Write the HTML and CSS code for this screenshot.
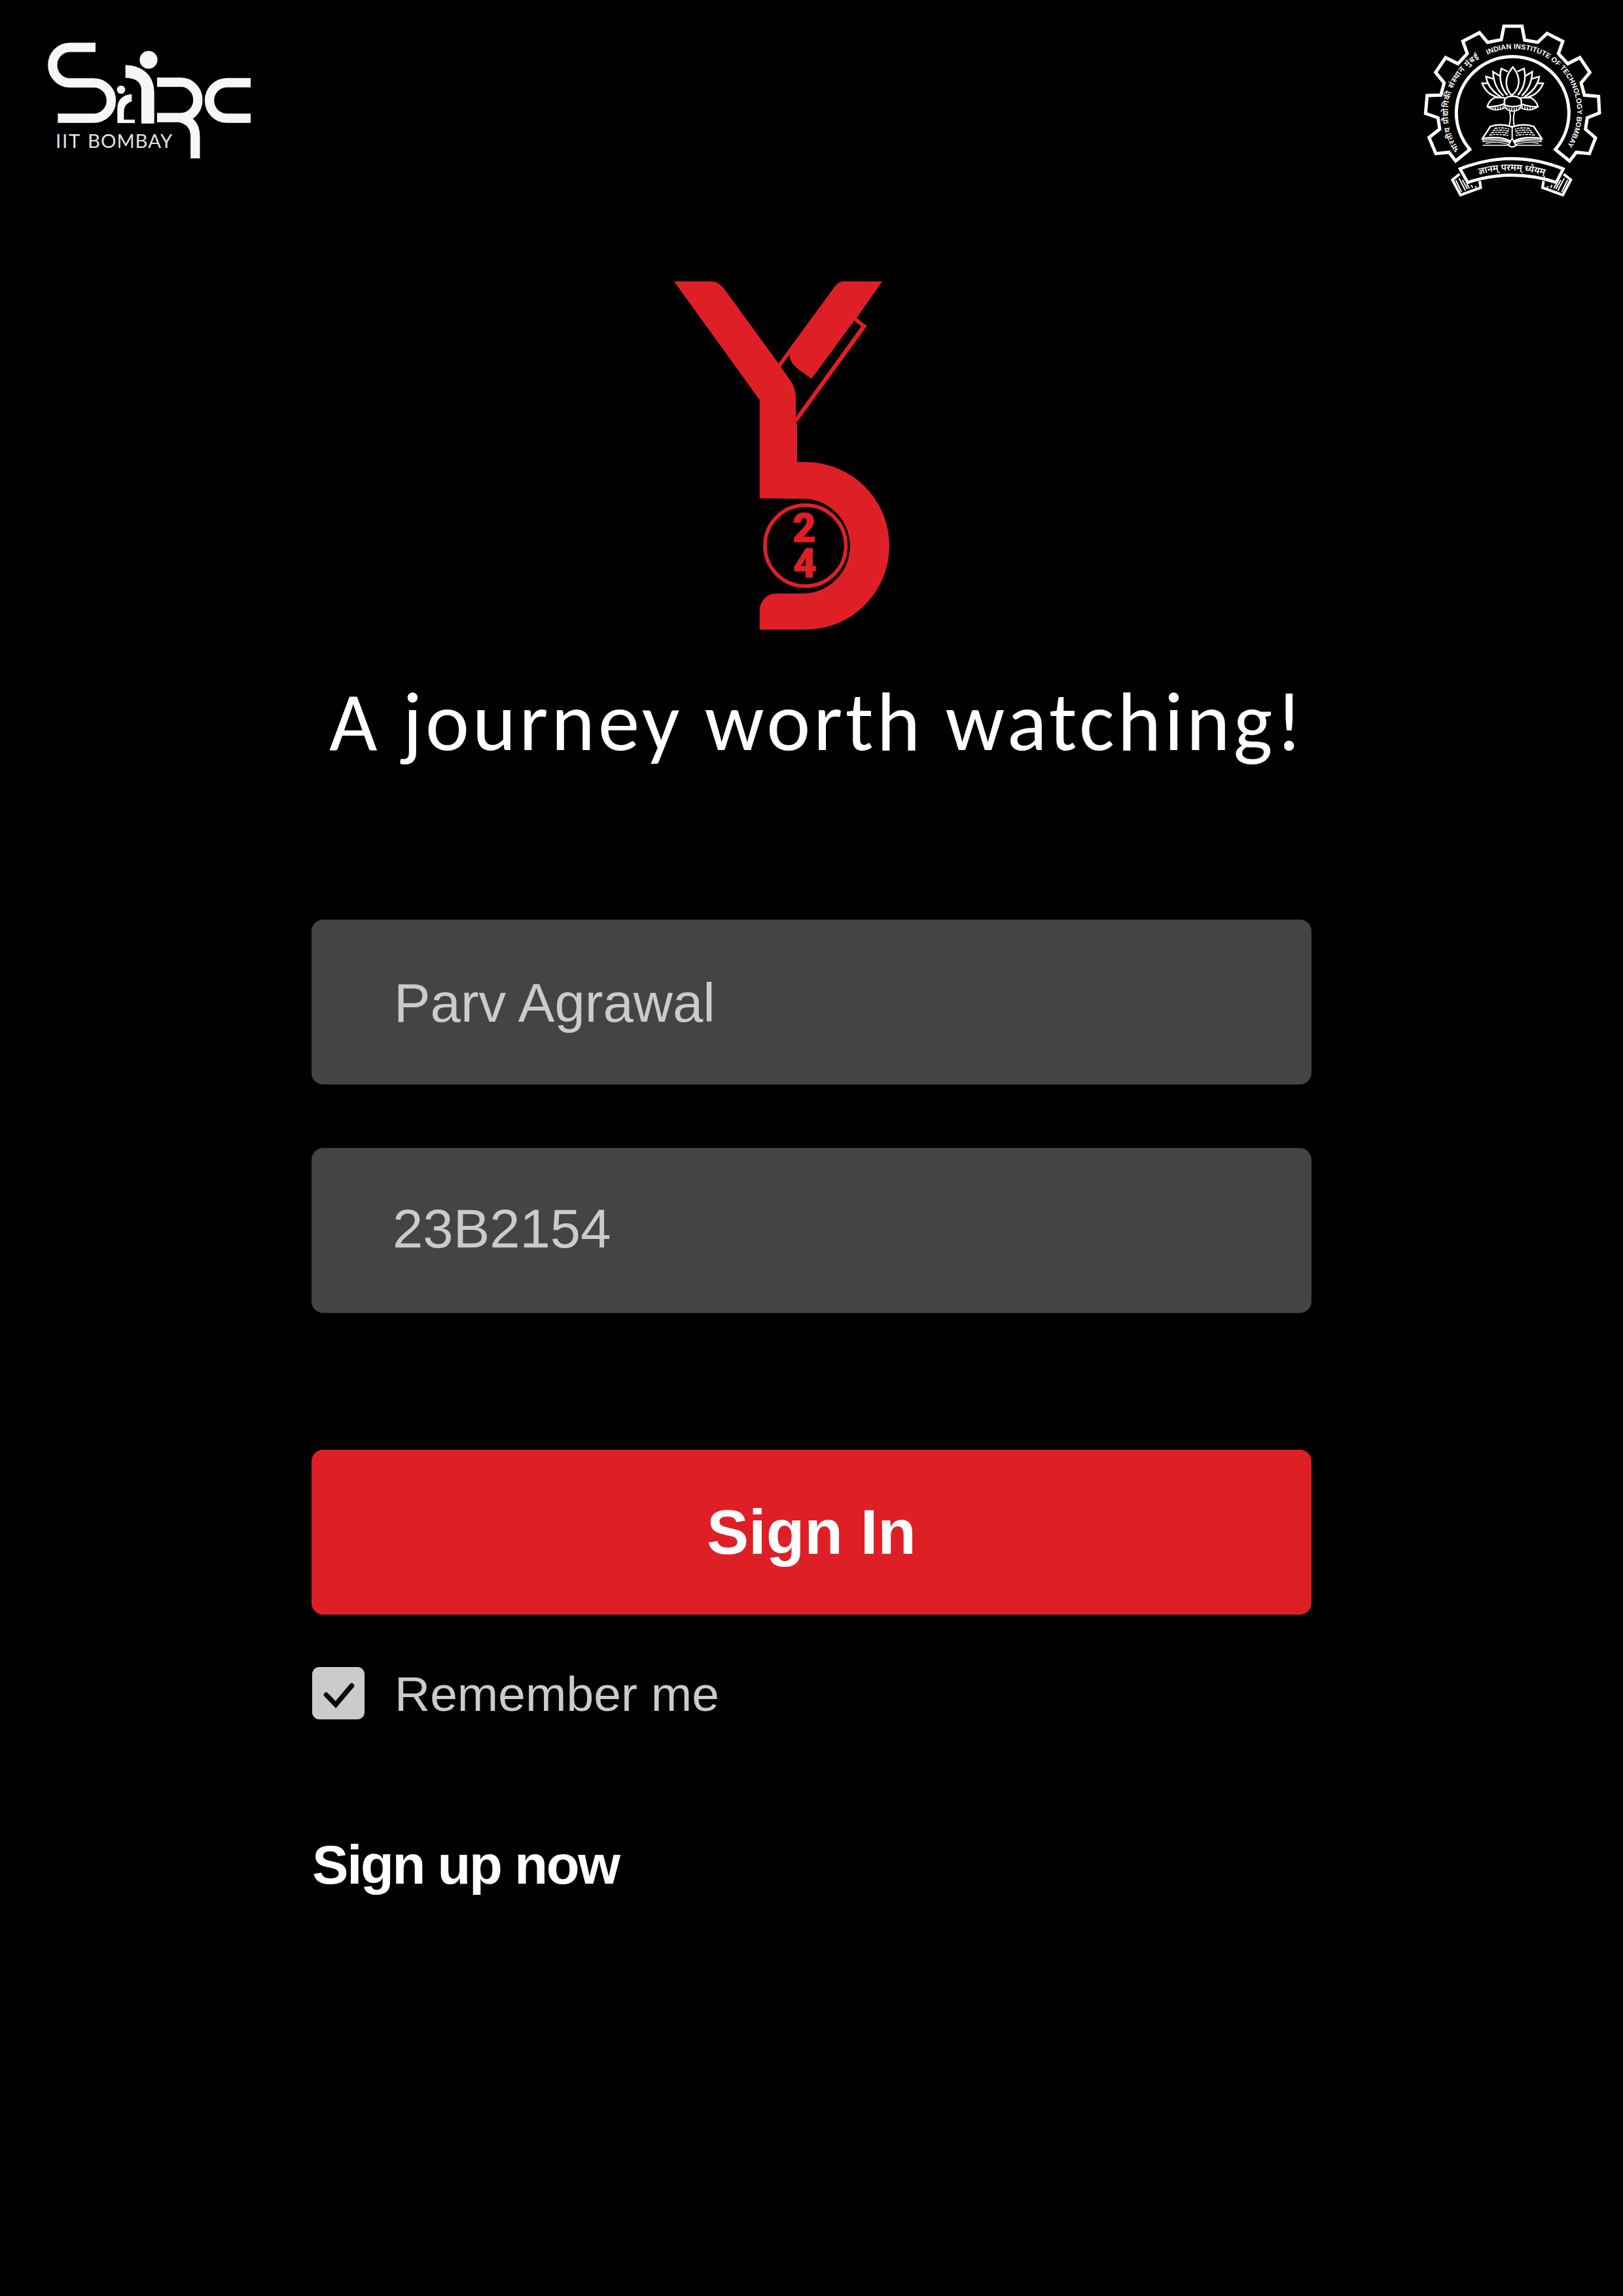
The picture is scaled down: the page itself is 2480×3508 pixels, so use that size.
FILE: index.html
```html
<!DOCTYPE html>
<html lang="en">
<head>
<meta charset="utf-8">
<title>Sign In</title>
<link rel="stylesheet" href="styles.css">
</head>
<body>
<main class="page">
  <header class="header">
    <svg class="sirc" viewBox="39 45 930 531" role="img" aria-label="SIRC IIT Bombay">
      <g fill="none" stroke="#f8f6f5" stroke-width="43">
        <path d="M258 67H140A79 81.5 0 0 0 140 230H250A80 81 0 0 1 250 392H85"/>
        <path d="M540 227H650A77 81 0 0 1 650 389H540M645 389Q715 405 715 475V576"/>
        <path d="M969 229H860A80 81.5 0 0 0 860 392H969"/>
      </g>
      <g fill="#f8f6f5">
        <circle cx="375" cy="261" r="19"/>
        <path d="M424 281V315Q388 325 388 365V398H438V414H358V345Q360 287 424 281Z"/>
        <circle cx="501" cy="124" r="41"/>
        <path d="M395 148C475 152 527 195 527 275V416H468V262C468 226 440 207 395 207Z"/>
      </g>
      <g class="sirc-text">
        <text x="75" y="528" textLength="112">IIT</text>
        <text x="222" y="528" textLength="388">BOMBAY</text>
      </g>
    </svg>

    <svg class="emblem" viewBox="0 0 900 870" role="img" aria-label="Indian Institute of Technology Bombay">
      <defs>
        <path id="arc-en" d="M339 191A288 288 0 0 1 688 630"/>
        <path id="arc-hi" d="M211 628A294 294 0 0 1 324 194"/>
        <path id="arc-motto" d="M300 740Q450 700 605 745"/>
        <g id="petals">
          <path d="M432 268L402 254C390 300 402 345 430 376M398 290L364 269C366 315 382 352 412 379M367 302L332 291C338 332 365 362 400 384M341 322L314 322C326 352 346 376 386 386"/>
          <path d="M418 388L372 387C352 398 341 414 338 429Q374 432 416 416"/>
          <path d="M338 429Q372 455 420 434M350 432V438M362 434V442M374 433V443M386 431V443M398 428V440M410 424V437" stroke-width="5"/>
        </g>
        <g id="book">
          <path d="M452 522Q400 504 352 520L316 575Q400 562 445 588"/>
          <path d="M318 575V590Q400 578 444 596M316 606H432M330 597Q395 586 440 604M318 583Q390 572 446 592" stroke-width="4"/>
          <path d="M370 529Q405 522 438 532M362 539Q400 532 438 542M355 549Q400 542 436 552M347 559Q390 553 434 561" stroke-width="5" stroke-dasharray="14 4 9 4"/>
        </g>
        <g id="scroll">
          <path d="M211 738L178 764L215 834L308 800L303 770" stroke-width="12"/>
          <path d="M193 765L220 820M208 757L238 814M224 765L247 806M244 783L256 803M264 788L271 800M282 794L287 800" stroke-width="6"/>
        </g>
      </defs>
      <g fill="none" stroke="#fff" stroke-width="7.5" stroke-linejoin="miter">
        <path stroke-width="15" d="M258 625L193 678L162 638L102 644L71 570L120 532L112 480L55 460L62 378L125 376L140 320L101 272L147 204L203 232L246 186L226 129L302 90L339 134L402 122L414 60H497L509 124L569 134L612 93L684 130L664 186L707 232L762 204L808 272L768 320L783 376L848 382L852 458L796 480L788 532L834 572L806 644L746 638L715 678L650 625A258 258 0 1 0 258 625Z"/>
        <path stroke-width="14" d="M213 714Q450 620 686 714L654 776Q450 710 248 776Z"/>
        <use href="#scroll"/>
        <use href="#scroll" transform="matrix(-1 0 0 1 899 0)"/>
        <path d="M455 247C414 295 418 345 450 378C490 345 494 295 455 247Z"/>
        <use href="#petals"/>
        <use href="#petals" transform="matrix(-1 0 0 1 908 0)"/>
        <path d="M416 400C425 375 482 375 494 400V422Q456 436 417 422Z"/>
        <path d="M417 422Q420 448 455 450Q490 448 494 422M428 431V442M439 434V447M450 435V449M461 435V449M472 434V447M483 431V442" stroke-width="5"/>
        <path d="M441 450Q448 485 438 515M463 450Q454 485 461 515" stroke-width="6"/>
        <use href="#book"/>
        <use href="#book" transform="matrix(-1 0 0 1 903 0)"/>
        <path d="M452 520V575M452 575Q440 595 435 606Q452 622 470 606Q462 592 452 575Z" stroke-width="6"/>
      </g>
      <g fill="#fff">
        <text class="ring-en"><textPath href="#arc-en" textLength="745">INDIAN INSTITUTE OF TECHNOLOGY BOMBAY</textPath></text>
        <text class="ring-hi"><textPath href="#arc-hi" textLength="484">भारतीय प्रौद्योगिकी संस्थान मुंबई</textPath></text>
        <text class="motto"><textPath href="#arc-motto" textLength="304">ज्ञानम् परमम् ध्येयम्</textPath></text>
      </g>
    </svg>
  </header>

  <svg class="brand" viewBox="1030 430 330 532" role="img" aria-label="Y 24">
    <g fill="#de2026">
      <path d="M1030 430H1088Q1098 430 1107 442L1189.3 555L1206.7 580Q1216 592 1216 608V643L1218 650V706H1231A127.8 127.8 0 0 1 1231 962H1160.7V933A26 26 0 0 1 1187 906.7H1231A72.5 72.5 0 0 0 1231 762Q1210 762 1186 761.5H1160.7V611Z"/>
      <path d="M1288 430H1348L1309 485.7L1324.7 498L1217.3 645.7L1215 638.5L1316 498.7L1305.3 490L1240 578.7L1218 562.7Q1206 553 1206.5 541.7L1192.7 561L1189 556L1271.7 443.3Q1280 430 1288 430Z"/>
      <text class="year" x="1211 1212" y="828.3 882.3">24</text>
    </g>
    <circle cx="1230.7" cy="833.7" r="61.8" fill="none" stroke="#de2026" stroke-width="5.6"/>
  </svg>

  <h1 class="tagline">A journey worth watching!</h1>

  <form class="form">
    <div class="field field-name">Parv Agrawal</div>
    <div class="field field-id">23B2154</div>
    <button class="submit" type="button">Sign In</button>
    <div class="remember">
      <svg class="check" viewBox="0 0 80 80"><rect width="80" height="80" rx="11" fill="#cbcbc9"/><path d="M21.5 42.5L36 57.5L60.5 28.5" fill="none" stroke="#090909" stroke-width="7.5" stroke-linecap="round"/></svg>
      <span>Remember me</span>
    </div>
    <a class="signup">Sign up now</a>
  </form>
</main>
</body>
</html>
```
FILE: styles.css
```css
* { box-sizing: border-box; }
body { margin: 0; background: #000; }
svg { display: block; flex: none; }
.page {
  width: 2480px;
  height: 3508px;
  overflow: hidden;
  background: #000;
  color: #fff;
  font-family: "Liberation Sans", Arial, sans-serif;
}
.header {
  display: flex;
  justify-content: space-between;
  align-items: flex-start;
  height: 430px;
  padding: 20px 20px 0 73px;
}
.sirc { width: 310px; height: 177px; margin-top: 45px; }
.sirc-text { font: 400 88px Lato, sans-serif; fill: #e4e2e1; }
.emblem { width: 300px; height: 290px; }
.ring-en { font: 700 33px "Liberation Sans", sans-serif; }
.ring-hi { font: 600 37px "Noto Sans Devanagari", "Noto Sans", sans-serif; }
.motto { font: 600 42px "Noto Sans Devanagari", "Noto Sans", sans-serif; }
.brand { width: 330px; height: 532px; margin-left: 1030px; }
.year { font: 900 62px Roboto, sans-serif; stroke: #de2026; stroke-width: 1px; }
.tagline {
  margin: 61px 0 0 503px;
  font: 400 127px/160px Calibri, Carlito, "Open Sans", sans-serif;
  letter-spacing: 4.8px;
  white-space: nowrap;
}
.form {
  display: flex;
  flex-direction: column;
  width: 1528px;
  margin: 222px 0 0 476px;
}
.field {
  display: flex;
  align-items: center;
  height: 252px;
  border-radius: 18px;
  background: #444;
  color: #cbcbcb;
  font-size: 83.3px;
}
.field-name { padding: 4px 0 0 126px; }
.field-id { margin-top: 97px; padding: 0 0 4px 124px; }
.submit {
  height: 252px;
  margin-top: 209px;
  padding: 0;
  border: 0;
  border-radius: 18px;
  background: #de2026;
  color: #fff;
  font: 700 96px "Liberation Sans", Arial, sans-serif;
}
.remember {
  display: flex;
  align-items: center;
  gap: 46px;
  height: 80px;
  margin: 80px 0 0 1px;
  color: #cbcbc9;
  font-size: 75px;
}
.check { width: 80px; height: 80px; }
.remember span { padding-top: 2px; }
.signup {
  margin: 173px 0 0 1px;
  font-size: 83.3px;
  font-weight: 700;
  line-height: 100px;
  letter-spacing: -2.4px;
}
```
